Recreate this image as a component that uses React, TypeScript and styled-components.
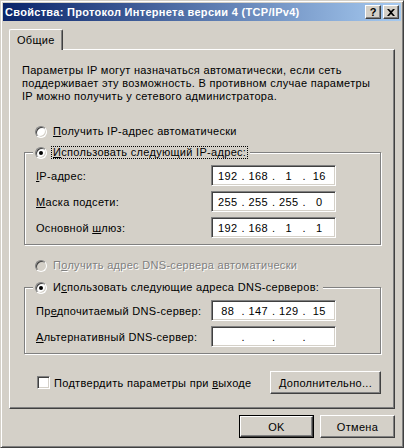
import React from "react";
import styled, { createGlobalStyle } from "styled-components";

const GlobalStyle = createGlobalStyle`
  html, body {
    margin: 0;
    padding: 0;
    background: #d4d0c8;
  }
  body {
    font-family: "Liberation Sans", Arial, sans-serif;
    font-size: 11px;
    letter-spacing: 0.3px;
    color: #000;
  }
`;

const FACE = "#d4d0c8";

const Window = styled.div`
  width: 404px;
  height: 448px;
  box-sizing: border-box;
  border: 1px solid;
  border-color: ${FACE} #404040 #404040 ${FACE};
  box-shadow: inset 1px 1px #fff, inset -1px -1px #808080;
  padding: 2px;
  background: ${FACE};
  display: flex;
  flex-direction: column;
`;

const TitleBar = styled.div`
  height: 18px;
  display: flex;
  align-items: center;
  padding-left: 2px;
  background: linear-gradient(to right, #0a246a, #a6caf0);
`;

const Title = styled.div`
  flex: 1;
  color: #fff;
  font-weight: bold;
  font-size: 11px;
  white-space: nowrap;
`;

const TitleButton = styled.div`
  width: 16px;
  height: 14px;
  box-sizing: border-box;
  margin-right: 2px;
  background: ${FACE};
  border: 1px solid;
  border-color: #fff #404040 #404040 #fff;
  box-shadow: inset -1px -1px #808080;
  display: flex;
  align-items: center;
  justify-content: center;
  font-weight: bold;
  font-size: 11px;
  letter-spacing: 0;
  line-height: 1;
`;

const Body = styled.div`
  flex: 1;
  display: flex;
  flex-direction: column;
  padding: 8px 6px 0 6px;
`;

const TabStrip = styled.div`
  display: flex;
`;

const Tab = styled.div`
  position: relative;
  z-index: 1;
  height: 21px;
  margin-bottom: -1px;
  box-sizing: border-box;
  padding: 0 7px;
  display: flex;
  align-items: center;
  background: ${FACE};
  border-top: 1px solid #fff;
  border-left: 1px solid #fff;
  border-right: 1px solid #404040;
  border-top-left-radius: 2px;
  border-top-right-radius: 2px;
  box-shadow: inset -1px 0 #808080;
`;

const TabPanel = styled.div`
  width: 386px;
  height: 360px;
  box-sizing: border-box;
  border: 1px solid;
  border-color: #fff #404040 #404040 #fff;
  box-shadow: inset -1px -1px #808080;
  display: flex;
  flex-direction: column;
`;

const Intro = styled.p`
  margin: 14px 0 0 12px;
  line-height: 13px;
`;

const OptionRow = styled.div<{ $top: number }>`
  display: flex;
  align-items: center;
  height: 13px;
  margin: ${(p) => p.$top}px 0 0 25px;
`;

const Radio = styled.span<{ $checked?: boolean; $disabled?: boolean }>`
  position: relative;
  width: 12px;
  height: 12px;
  box-sizing: border-box;
  border-radius: 50%;
  border: 1px solid;
  border-color: #808080 #fff #fff #808080;
  box-shadow: inset 1px 1px #404040, inset -1px -1px ${FACE};
  background: ${(p) => (p.$disabled ? FACE : "#fff")};
  margin-right: 4px;
  flex: none;
  &::after {
    content: "";
    display: ${(p) => (p.$checked ? "block" : "none")};
    position: absolute;
    left: 3px;
    top: 3px;
    width: 4px;
    height: 4px;
    border-radius: 50%;
    background: #000;
  }
`;

const OptionText = styled.span<{ $disabled?: boolean; $focused?: boolean }>`
  white-space: nowrap;
  line-height: 11px;
  padding: 0 1px;
  border: 1px dotted ${(p) => (p.$focused ? "#000" : "transparent")};
  color: ${(p) => (p.$disabled ? "#808080" : "#000")};
  text-shadow: ${(p) => (p.$disabled ? "1px 1px #fff" : "none")};
`;

const Group = styled.div<{ $top: number; $height: number }>`
  position: relative;
  width: 357px;
  height: ${(p) => p.$height}px;
  box-sizing: border-box;
  margin: ${(p) => p.$top}px 0 0 14px;
  border: 1px solid #808080;
  box-shadow: 1px 1px #fff, inset 1px 1px #fff;
  padding: 12px 0 0 11px;
  display: grid;
  grid-template-columns: 175px 125px;
  grid-auto-rows: 21px;
  row-gap: 5px;
  align-items: center;
`;

const Legend = styled.div`
  position: absolute;
  top: -7px;
  left: 8px;
  height: 13px;
  padding: 0 2px;
  background: ${FACE};
  display: flex;
  align-items: center;
`;

const FieldLabel = styled.span`
  white-space: nowrap;
`;

const IpField = styled.div`
  width: 125px;
  height: 21px;
  box-sizing: border-box;
  border: 1px solid;
  border-color: #808080 #fff #fff #808080;
  box-shadow: inset 1px 1px #404040, inset -1px -1px ${FACE};
  background: #fff;
  padding: 0 2px;
  display: flex;
  align-items: center;
`;

const Octet = styled.span`
  width: 28px;
  text-align: center;
`;

const Dot = styled.span`
  width: 3px;
  text-align: center;
`;

const Footer = styled.div`
  display: flex;
  align-items: center;
  margin: 17px 0 0 27px;
  width: 344px;
`;

const CheckBox = styled.span`
  width: 13px;
  height: 13px;
  box-sizing: border-box;
  border: 1px solid;
  border-color: #808080 #fff #fff #808080;
  box-shadow: inset 1px 1px #404040, inset -1px -1px ${FACE};
  background: #fff;
  margin-right: 4px;
`;

const CheckText = styled.span`
  flex: 1;
  white-space: nowrap;
`;

const Button = styled.div<{ $default?: boolean }>`
  width: 75px;
  height: 23px;
  box-sizing: border-box;
  background: ${FACE};
  border: 1px solid ${(p) => (p.$default ? "#000" : "transparent")};
  display: flex;
  & > span {
    flex: 1;
    display: flex;
    align-items: center;
    justify-content: center;
    border: 1px solid;
    border-color: #fff #404040 #404040 #fff;
    box-shadow: inset -1px -1px #808080;
    margin: ${(p) => (p.$default ? "0" : "-1px")};
  }
`;

const WideButton = styled(Button)`
  width: 111px;
`;

const ButtonRow = styled.div`
  display: flex;
  justify-content: flex-end;
  gap: 6px;
  margin-top: 6px;
  width: 386px;
`;

const Ip = ({ parts }: { parts: string[] }) => (
  <IpField>
    {parts.map((p, i) => (
      <React.Fragment key={i}>
        {i > 0 && <Dot>.</Dot>}
        <Octet>{p}</Octet>
      </React.Fragment>
    ))}
  </IpField>
);

export default function App() {
  return (
    <>
      <GlobalStyle />
      <Window>
        <TitleBar>
          <Title>Свойства: Протокол Интернета версии 4 (TCP/IPv4)</Title>
          <TitleButton>?</TitleButton>
          <TitleButton>
            <svg width="8" height="7" viewBox="0 0 8 7">
              <path d="M0 0h2l2 2 2-2h2L5 3.5 8 7H6L4 5 2 7H0l3-3.5z" fill="#000" />
            </svg>
          </TitleButton>
        </TitleBar>
        <Body>
          <TabStrip>
            <Tab>Общие</Tab>
          </TabStrip>
          <TabPanel>
            <Intro>
              Параметры IP могут назначаться автоматически, если сеть
              <br />
              поддерживает эту возможность. В противном случае параметры
              <br />
              IP можно получить у сетевого администратора.
            </Intro>
            <OptionRow $top={22}>
              <Radio />
              <OptionText>
                <u>П</u>олучить IP-адрес автоматически
              </OptionText>
            </OptionRow>
            <Group $top={14} $height={93}>
              <Legend>
                <Radio $checked />
                <OptionText $focused>
                  <u>И</u>спользовать следующий IP-адрес:
                </OptionText>
              </Legend>
              <FieldLabel>
                <u>I</u>P-адрес:
              </FieldLabel>
              <Ip parts={["192", "168", "1", "16"]} />
              <FieldLabel>
                <u>М</u>аска подсети:
              </FieldLabel>
              <Ip parts={["255", "255", "255", "0"]} />
              <FieldLabel>
                Основной <u>ш</u>люз:
              </FieldLabel>
              <Ip parts={["192", "168", "1", "1"]} />
            </Group>
            <OptionRow $top={14}>
              <Radio $disabled />
              <OptionText $disabled>
                П<u>о</u>лучить адрес DNS-сервера автоматически
              </OptionText>
            </OptionRow>
            <Group $top={15} $height={67}>
              <Legend>
                <Radio $checked />
                <OptionText>
                  И<u>с</u>пользовать следующие адреса DNS-серверов:
                </OptionText>
              </Legend>
              <FieldLabel>
                Пр<u>е</u>дпочитаемый DNS-сервер:
              </FieldLabel>
              <Ip parts={["88", "147", "129", "15"]} />
              <FieldLabel>
                <u>А</u>льтернативный DNS-сервер:
              </FieldLabel>
              <Ip parts={["", "", "", ""]} />
            </Group>
            <Footer>
              <CheckBox />
              <CheckText>
                Подтвердить параметры при <u>в</u>ыходе
              </CheckText>
              <WideButton>
                <span>
                  <u>Д</u>ополнительно...
                </span>
              </WideButton>
            </Footer>
          </TabPanel>
          <ButtonRow>
            <Button $default>
              <span>OK</span>
            </Button>
            <Button>
              <span>Отмена</span>
            </Button>
          </ButtonRow>
        </Body>
      </Window>
    </>
  );
}
